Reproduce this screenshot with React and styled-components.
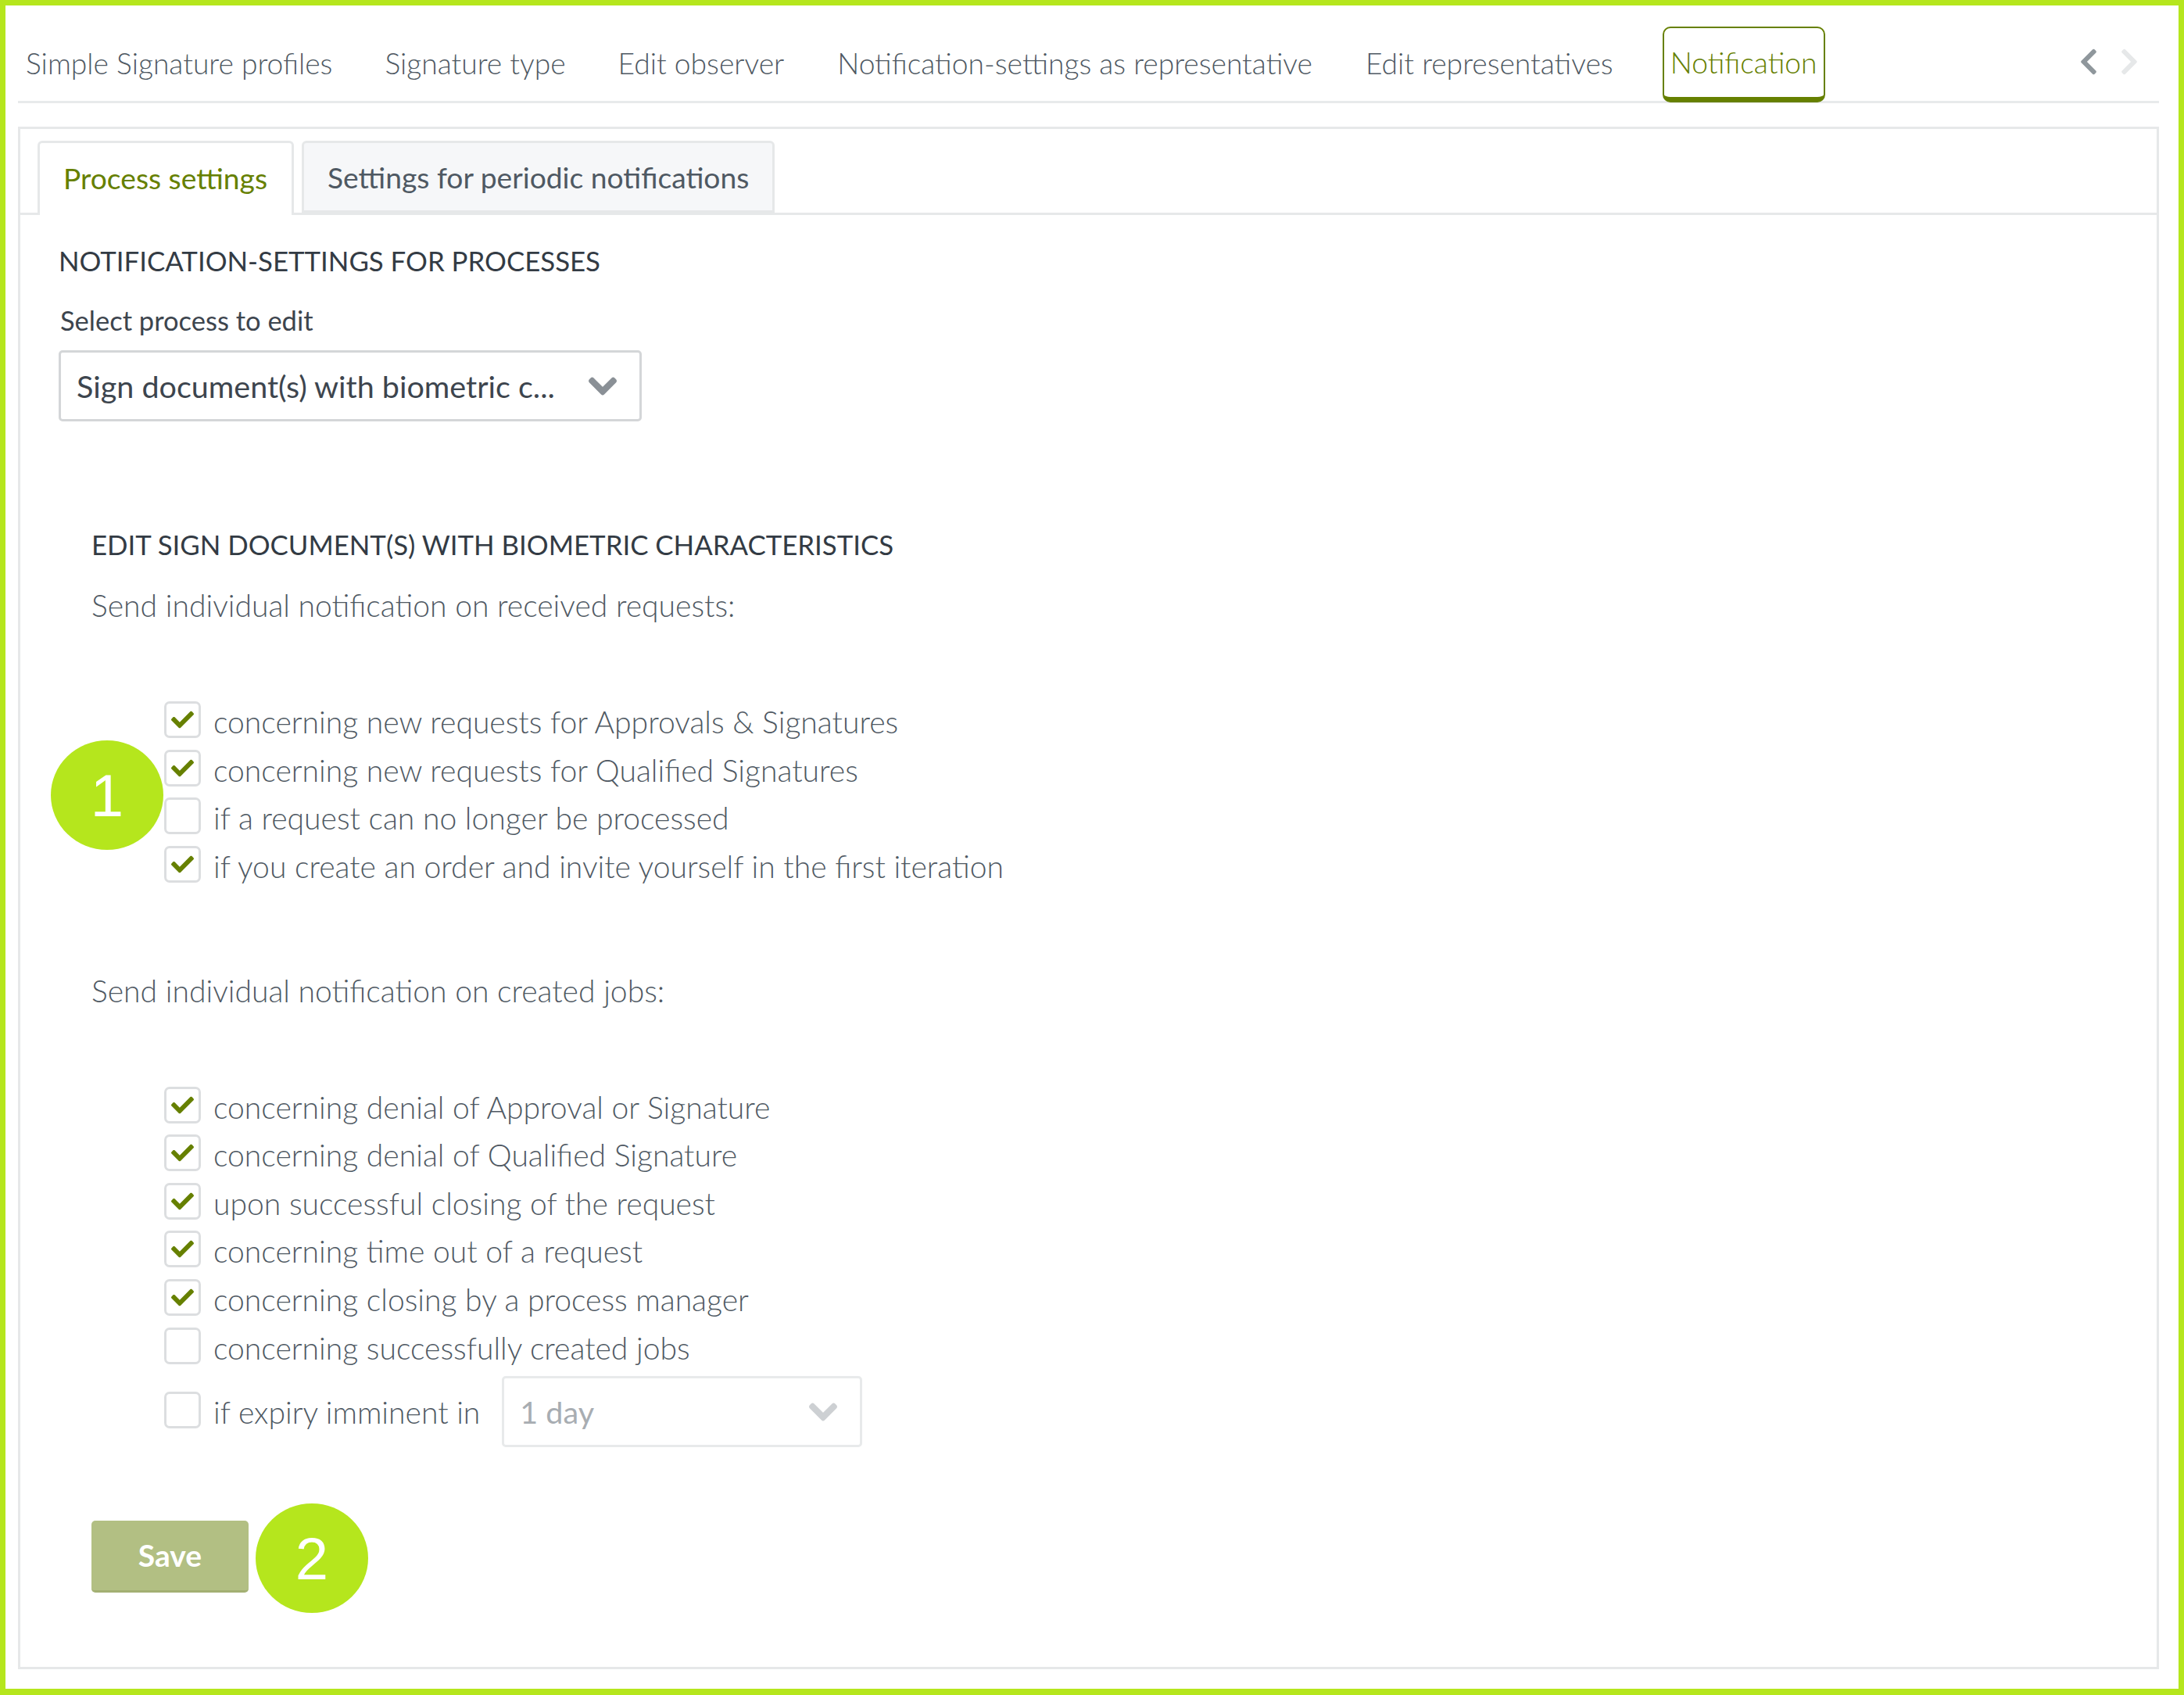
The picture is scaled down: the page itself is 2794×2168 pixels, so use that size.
import * as React from "react"
import styled, { createGlobalStyle } from "styled-components"
import { FaCheck, FaChevronDown, FaChevronLeft, FaChevronRight } from "react-icons/fa"

const GlobalStyle = createGlobalStyle`
  html, body {
    margin: 0;
    padding: 0;
    background: #fff;
  }
  body {
    font-family: Lato, "Open Sans", sans-serif;
  }
`

const Frame = styled.div`
  position: relative;
  box-sizing: border-box;
  width: 2794px;
  height: 2168px;
  border: 7px solid #b5e61d;
  border-bottom-width: 8px;
  padding: 27px 25px 0 16px;
  background: #fff;
  overflow: hidden;
`

const Nav = styled.nav`
  display: flex;
  align-items: flex-start;
  height: 95px;
  border-bottom: 3px solid #e8eaeb;
  box-sizing: content-box;
  margin-bottom: 30px;
`

const NavItem = styled.div`
  display: flex;
  align-items: center;
  box-sizing: border-box;
  height: 93px;
  margin-left: ${({ $gap }) => $gap}px;
  font-size: 37.2px;
  font-weight: 300;
  color: #4f5963;
  white-space: nowrap;
`

const ActiveNavItem = styled(NavItem)`
  height: 97px;
  width: 208px;
  justify-content: center;
  padding-bottom: 2px;
  border: 2px solid #668000;
  border-bottom: 7px solid #668000;
  border-radius: 10px;
  color: #668000;
`

const Pager = styled.div`
  display: flex;
  align-items: center;
  gap: 14px;
  height: 89px;
  margin-left: auto;
  padding-right: 19px;
  font-size: 38px;
`

const PagerArrow = styled.span`
  display: flex;
  color: ${({ $muted }) => ($muted ? "#e6e8e9" : "#8f979c")};
`

const Panel = styled.section`
  box-sizing: border-box;
  height: 1973px;
  border: 3px solid #e6e8e9;
  padding-top: 15px;
`

const TabStrip = styled.div`
  display: flex;
  gap: 10px;
  height: 92px;
  padding-left: 22px;
  border-bottom: 3px solid #e6e8e9;
`

const Tab = styled.div`
  display: flex;
  align-items: center;
  box-sizing: border-box;
  height: ${({ $active }) => ($active ? "95px" : "92px")};
  padding: 0 ${({ $active }) => ($active ? "31px 3px 30px" : "30px 0")};
  border: 3px solid #e6e8e9;
  border-bottom: ${({ $active }) => ($active ? "none" : "3px solid #e6e8e9")};
  border-radius: 6px 6px 0 0;
  background: ${({ $active }) => ($active ? "#fff" : "#f6f7f9")};
  color: ${({ $active }) => ($active ? "#668000" : "#4f5963")};
  font-size: 37.2px;
  white-space: nowrap;
`

const Body = styled.div`
  padding: 36px 0 0 49px;
`

const Heading = styled.h2`
  margin: 0;
  font-size: 34.8px;
  font-weight: 400;
  line-height: 46px;
  color: #333b44;
  white-space: nowrap;
`

const FieldLabel = styled.div`
  margin: 31px 0 16px 2px;
  font-size: 34.5px;
  line-height: 44px;
  color: #3d454e;
`

const Select = styled.div`
  display: flex;
  align-items: center;
  justify-content: space-between;
  box-sizing: border-box;
  flex: none;
  width: ${({ $width }) => $width}px;
  height: 91px;
  margin-left: ${({ $offset }) => $offset || 0}px;
  padding: 0 27px 0 20px;
  border: 3px solid ${({ $disabled }) => ($disabled ? "#e8eaeb" : "#d4d6d8")};
  border-radius: 5px;
  background: #fff;
  color: ${({ $disabled }) => ($disabled ? "#a8adb2" : "#3d454e")};
  font-size: 39.5px;
  font-weight: 400;
  white-space: nowrap;
`

const Chevron = styled.span`
  display: flex;
  color: ${({ $disabled }) => ($disabled ? "#cdd0d3" : "#8a9096")};
  font-size: 40px;

  svg {
    stroke: currentColor;
    stroke-width: 24px;
  }
`

const Section = styled.div`
  padding-left: 42px;
`

const EditHeading = styled(Heading)`
  margin-top: 135px;
`

const Lead = styled.p`
  margin: ${({ $top }) => $top}px 0 0;
  font-size: 39.1px;
  font-weight: 300;
  line-height: 48px;
  color: #4f5963;
`

const Options = styled.div`
  display: flex;
  flex-direction: column;
  margin: ${({ $top }) => $top}px 0 0 93px;
`

const OptionRow = styled.div`
  display: flex;
  align-items: center;
  height: ${({ $height }) => $height || 61.6}px;
  gap: 16px;
  font-size: 39.1px;
  font-weight: 300;
  color: #4f5963;
  white-space: nowrap;
`

const Box = styled.span`
  display: flex;
  align-items: center;
  justify-content: center;
  flex: none;
  box-sizing: border-box;
  width: 47px;
  height: 47px;
  margin-top: -4px;
  border: 3px solid #dcdee0;
  border-radius: 7px;
  background: #fff;
  color: #668000;
  font-size: 29px;
`

const SaveButton = styled.button`
  display: block;
  width: 201px;
  height: 92px;
  margin-top: 87px;
  padding: 0;
  border: none;
  border-bottom: 3px solid #a3b073;
  border-radius: 5px;
  background: #b2bf83;
  color: #fff;
  font-family: inherit;
  font-size: 39px;
  font-weight: 700;
`

const Badge = styled.div`
  position: absolute;
  left: ${({ $left }) => $left}px;
  top: ${({ $top }) => $top}px;
  display: flex;
  align-items: center;
  justify-content: center;
  width: 144px;
  height: 140px;
  border-radius: 50%;
  background: #b5e61d;
  color: #fff;
  font-family: "Liberation Sans", Arial, sans-serif;
  font-size: 76px;
`

const navItems = [
  { label: "Simple Signature profiles", gap: 10 },
  { label: "Signature type", gap: 67 },
  { label: "Edit observer", gap: 67 },
  { label: "Notification-settings as representative", gap: 68 },
  { label: "Edit representatives", gap: 68 },
]

const receivedOptions = [
  { label: "concerning new requests for Approvals & Signatures", checked: true },
  { label: "concerning new requests for Qualified Signatures", checked: true },
  { label: "if a request can no longer be processed", checked: false },
  { label: "if you create an order and invite yourself in the first iteration", checked: true },
]

const createdOptions = [
  { label: "concerning denial of Approval or Signature", checked: true },
  { label: "concerning denial of Qualified Signature", checked: true },
  { label: "upon successful closing of the request", checked: true },
  { label: "concerning time out of a request", checked: true },
  { label: "concerning closing by a process manager", checked: true },
  { label: "concerning successfully created jobs", checked: false },
]

const Option = ({ label, checked }) => (
  <OptionRow>
    <Box>{checked && <FaCheck />}</Box>
    {label}
  </OptionRow>
)

export default function App() {
  return (
    <>
      <GlobalStyle />
      <Frame>
        <Nav>
          {navItems.map(item => (
            <NavItem key={item.label} $gap={item.gap}>{item.label}</NavItem>
          ))}
          <ActiveNavItem $gap={63}>Notification</ActiveNavItem>
          <Pager>
            <PagerArrow><FaChevronLeft /></PagerArrow>
            <PagerArrow $muted><FaChevronRight /></PagerArrow>
          </Pager>
        </Nav>
        <Panel>
          <TabStrip>
            <Tab $active>Process settings</Tab>
            <Tab>Settings for periodic notifications</Tab>
          </TabStrip>
          <Body>
            <Heading>NOTIFICATION-SETTINGS FOR PROCESSES</Heading>
            <FieldLabel>Select process to edit</FieldLabel>
            <Select $width={746}>
              Sign document(s) with biometric c...
              <Chevron><FaChevronDown /></Chevron>
            </Select>
            <Section>
              <EditHeading>EDIT SIGN DOCUMENT(S) WITH BIOMETRIC CHARACTERISTICS</EditHeading>
              <Lead $top={30}>Send individual notification on received requests:</Lead>
              <Options $top={94}>
                {receivedOptions.map(option => <Option key={option.label} {...option} />)}
              </Options>
              <Lead $top={105}>Send individual notification on created jobs:</Lead>
              <Options $top={93}>
                {createdOptions.map(option => <Option key={option.label} {...option} />)}
                <OptionRow $height={104}>
                  <Box />
                  if expiry imminent in
                  <Select $disabled $width={461} $offset={12}>
                    1 day
                    <Chevron $disabled><FaChevronDown /></Chevron>
                  </Select>
                </OptionRow>
              </Options>
              <SaveButton>Save</SaveButton>
            </Section>
          </Body>
        </Panel>
        <Badge $left={58} $top={940}>1</Badge>
        <Badge $left={320} $top={1916}>2</Badge>
      </Frame>
    </>
  )
}
